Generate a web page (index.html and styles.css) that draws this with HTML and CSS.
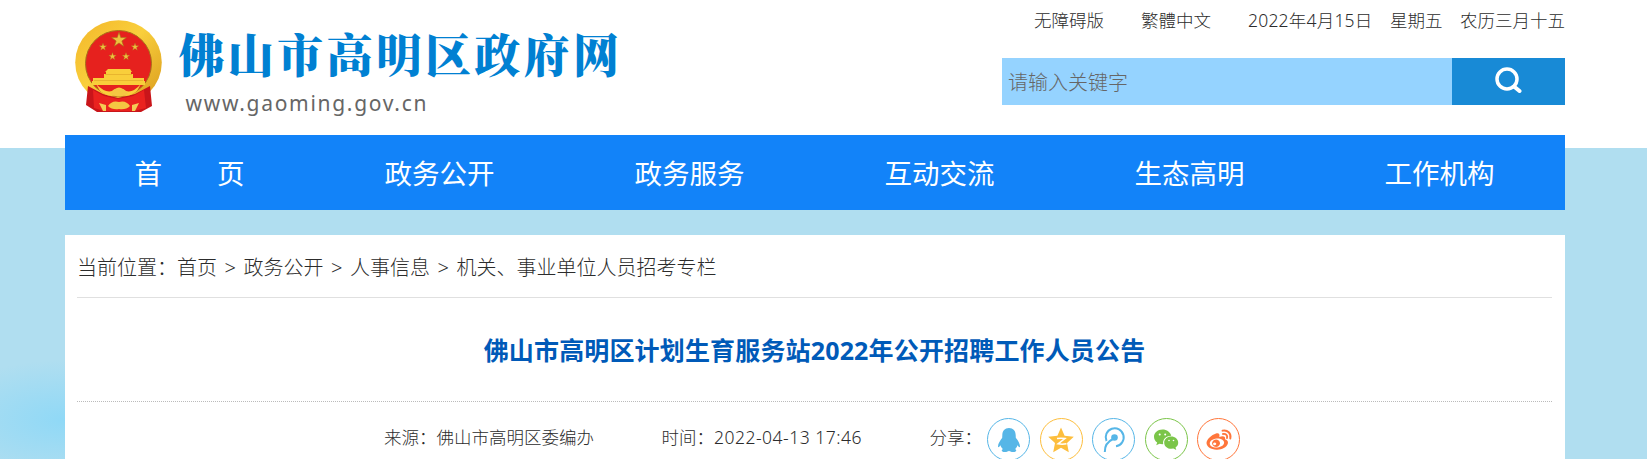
FILE: index.html
```html
<!DOCTYPE html>
<html lang="zh-CN">

<head>
  <meta charset="UTF-8">
  <meta name="viewport" content="width=device-width, initial-scale=1.0">
  <title>佛山市高明区计划生育服务站2022年公开招聘工作人员公告</title>
  <link rel="stylesheet" href="styles.css">
</head>

<body>
  <div class="wrap">
    <div class="header">
      <a class="logo">
        <svg class="emblem" viewBox="0 0 88 94">
          <defs>
            <linearGradient id="gold" x1="0" y1="0" x2="1" y2="1">
              <stop offset="0" stop-color="#f3b62a" />
              <stop offset=".45" stop-color="#f9cf3c" />
              <stop offset="1" stop-color="#d99a1c" />
            </linearGradient>
            <path id="star" d="M0-10 2.3-3.1H9.5L3.7 1.2 5.9 8.1 0 3.8-5.9 8.1-3.7 1.2-9.5-3.1H-2.3Z" />
          </defs>
          <ellipse cx="43.5" cy="42.5" rx="43.3" ry="42.3" fill="url(#gold)" />
          <ellipse cx="43.5" cy="43.5" rx="33" ry="33" fill="#e6211e" stroke="#a8701a" stroke-width="1" />
          <g fill="#eec23e" stroke="#a96d18" stroke-width=".8">
            <use href="#star" transform="translate(44 20) scale(.78)" />
            <use href="#star" transform="translate(28 27) scale(.4)" />
            <use href="#star" transform="translate(60 27) scale(.4)" />
            <use href="#star" transform="translate(37.500 36.500) scale(.4)" />
            <use href="#star" transform="translate(51 36.500) scale(.4)" />
          </g>
          <path fill="#f9ce3b" d="M33 49H55L57 52H56V54H58V58H69V61H70V65H17V61H18V58H29V54H31V52H30Z" />
          <path stroke="#e3ab2a" stroke-width=".7" fill="none" d="M30 54.500H57M19 60.500H68" />
          <path fill="#c9151a" d="M13 66 28 74 43 78 60 74 75 66 77 86 66 92H22L11 85Z" />
          <path fill="#ea221f" d="M18 70 29 76 43 79 58 76 69 70 71 88 59 91H29L19 88Z" />
          <path fill="#f9cf3c" d="M21 64Q33 76 40 69Q44 66 48 69Q55 76 66 64L62 71Q53 78 48 75Q44 78 40 75Q34 78 25 71Z" />
          <path fill="#f4c742" d="M35 74Q38 68 44 69Q50 68 53 74Q48 77 44 76Q40 77 35 74ZM33 86Q37 80 44 82Q51 80 55 86Q51 90 44 89Q37 90 33 86Z" />
          <path fill="#f4cc55" d="M24 83 31 85V91H28ZM64 83 57 85V91H60Z" />
        </svg>
        <div class="logo-text">
          <div class="site-name">佛山市高明区政府网</div>
          <div class="site-url">www.gaoming.gov.cn</div>
        </div>
      </a>
      <div class="header-right">
        <div class="top-links">
          <a class="link-wza">无障碍版</a>
          <a class="link-ft">繁體中文</a>
          <span class="date">2022年4月15日</span>
          <span class="week">星期五</span>
          <span>农历三月十五</span>
        </div>
        <div class="search">
          <input class="search-input" type="text" placeholder="请输入关键字">
          <button class="search-btn">
            <svg width="28" height="26" viewBox="0 0 28 26" fill="none" stroke="#fff">
              <circle cx="12" cy="12" r="10" stroke-width="3.500" />
              <path d="M19 19.500 24.500 24" stroke-width="4" stroke-linecap="round" />
            </svg>
          </button>
        </div>
      </div>
    </div>

    <div class="nav">
      <a>首　　页</a>
      <a>政务公开</a>
      <a>政务服务</a>
      <a>互动交流</a>
      <a>生态高明</a>
      <a>工作机构</a>
    </div>

    <div class="content">
      <div class="position">
        当前位置：<a>首页</a><i>&gt;</i><a>政务公开</a><i>&gt;</i><a>人事信息</a><i>&gt;</i><a>机关、事业单位人员招考专栏</a>
      </div>
      <h1 class="title">佛山市高明区计划生育服务站2022年公开招聘工作人员公告</h1>
      <div class="info">
        <span class="source">来源：佛山市高明区委编办</span>
        <span class="time">时间：<span class="time-value">2022-04-13 17:46</span></span>
        <span class="share-label">分享：</span>
        <div class="share">
          <a class="icon qq">
            <svg viewBox="0 0 24 24"><path d="M12 0C7.800 0 5.300 3 5.300 7.300L5.200 9.700C3 12.500 1 15.700 1 18.400C1 20 2.200 19 3.500 17.200C3.900 18.800 4.700 20 5.900 21C4 22 4.300 24 7.800 24C10 24 11.200 23.300 12 22.700C12.800 23.300 14 24 16.200 24C19.700 24 20 22 18.100 21C19.300 20 20.100 18.800 20.500 17.200C21.800 19 23 20 23 18.400C23 15.700 21 12.500 18.800 9.700L18.700 7.300C18.700 3 16.200 0 12 0Z" /></svg>
          </a>
          <a class="icon qzone">
            <svg viewBox="0 0 24 24"><path d="M12-.5 15.600 7.700 24.800 8.700 18 15 19.800 24.300 12 19.700 4.200 24.300 6 15-.8 8.700 8.400 7.700Z" /><path fill="none" stroke="#fff" stroke-width="1.500" d="M8 10.500Q12 9.800 16 10.500L9 15.800Q13 16.600 17.500 15.800" /></svg>
          </a>
          <a class="icon tqq">
            <svg viewBox="0 0 24 24"><circle cx="12.500" cy="9.500" r="3.300" /><path fill="none" stroke="currentColor" stroke-width="2" d="M4.500 13A9 9 0 1 1 14 18.200M11 11Q2.500 15 2.800 24" /></svg>
          </a>
          <a class="icon wechat">
            <svg viewBox="0 0 24 24"><path d="M8.500 1.500C3.500 1.500 0 4.800 0 8.800C0 11.200 1.200 13.200 3.200 14.600L2.200 17.300 5.500 15.700Q7.500 16.300 9.200 16.100C8.300 11.500 12 7.600 17.300 7.700C16.300 4.100 12.800 1.500 8.500 1.500Z" /><path d="M17.200 8.600C13.300 8.600 10.200 11.300 10.200 14.700C10.200 18.200 13.300 20.800 17.200 20.800L19.400 20.500 22.300 22 21.500 19.500C23.200 18.300 24.200 16.700 24.200 14.700C24.200 11.300 21.100 8.600 17.200 8.600Z" /><g fill="#fff"><circle cx="5.700" cy="6.500" r="1" /><circle cx="11.200" cy="6.500" r="1" /><circle cx="15" cy="12.500" r=".8" /><circle cx="19.500" cy="12.500" r=".8" /></g></svg>
          </a>
          <a class="icon weibo">
            <svg viewBox="0 0 24 24"><path fill-rule="evenodd" d="M9 5.500C12 4.500 13 6.500 12.300 9C15.500 7.600 19 8 18 11.200C20.500 12 21.500 13.500 20.800 15.800C19.500 19.500 14.500 22 9.500 21.700C4 21.500-.5 18.800-.5 15C-.5 11.500 4.500 6.800 9 5.500ZM9.500 10.500C5.500 10.900 2.500 13.200 2.800 15.700C3 18.200 6.400 19.900 10.400 19.500C14.400 19.100 17.400 16.900 17.100 14.300C16.800 11.800 13.500 10.100 9.500 10.500Z" /><path fill-rule="evenodd" d="M9 11.500A4 3.700 0 1 0 9.100 11.500ZM7.700 14.500A1.600 1.400 0 1 1 7.600 14.500Z" /><path fill="none" stroke="currentColor" stroke-width="1.900" stroke-linecap="round" d="M15.500 2.700C20.500 1.500 24.500 5.500 23.300 10.500M16 6C19 5.500 20.800 7.500 20 10" /></svg>
          </a>
        </div>
      </div>
    </div>
  </div>
</body>

</html>
```
FILE: styles.css
```css
* {
  box-sizing: border-box;
}

body {
  margin: 0;
  height: 459px;
  overflow: hidden;
  color: #2c2c2c;
  font-family: "Noto Sans", "Noto Sans CJK SC", sans-serif;
  font-size: 17.5px;
  font-weight: 300;
  background:
    linear-gradient(#fff 148px, transparent 148px),
    radial-gradient(ellipse 130px 60px at 65px 420px, rgba(140, 216, 247, .9), transparent),
    #b0def0;
}

.wrap {
  width: 1500px;
  margin-left: 65px;
}

.header {
  display: flex;
  justify-content: space-between;
  height: 135px;
}

.logo {
  display: flex;
}

.emblem {
  width: 88px;
  height: 94px;
  margin: 20px 0 0 9.5px;
}

.logo-text {
  margin: 22px 0 0 16px;
}

.site-name {
  height: 60px;
  line-height: 60px;
  color: #0080d2;
  font-family: "Noto Serif CJK SC", "Noto Sans CJK SC", serif;
  font-size: 46px;
  font-weight: 900;
  letter-spacing: 3.3px;
  white-space: nowrap;
}

.site-url {
  margin-left: 7px;
  padding-top: 4px;
  line-height: 34px;
  color: #666;
  font-family: "Noto Sans", sans-serif;
  font-size: 21px;
  font-weight: 400;
  letter-spacing: 1.7px;
}

.header-right {
  width: 563px;
}

.top-links {
  display: flex;
  justify-content: flex-end;
  height: 58px;
  line-height: 41px;
  white-space: nowrap;
}

.link-wza {
  margin-right: 37px;
}

.link-ft {
  margin-right: 37px;
}

.date,
.week {
  margin-right: 17.5px;
}

.date {
  letter-spacing: .2px;
}

.search {
  display: flex;
  height: 47px;
}

.search-input {
  flex: 1;
  min-width: 0;
  padding: 2px 6px 0;
  border: 0;
  background: #95d3ff;
  font: inherit;
  font-size: 20px;
}

.search-input::placeholder {
  color: #666;
}

.search-btn {
  display: flex;
  justify-content: center;
  width: 113px;
  padding: 9px 0 0;
  border: 0;
  background: #188ad6;
}

.nav {
  display: flex;
  height: 75px;
  background: #1283f9;
}

.nav a {
  width: 250px;
  padding-right: 1px;
  line-height: 77px;
  text-align: center;
  color: #fff;
  font-size: 27.5px;
  font-weight: 400;
}

.content {
  height: 240px;
  margin-top: 25px;
  padding: 0 13px 0 12px;
  background: #fff;
}

.position {
  height: 63px;
  line-height: 65px;
  border-bottom: 1px solid #e0e0e0;
  font-size: 20px;
}

.position i {
  display: inline-block;
  width: 26.5px;
  text-align: center;
  font-style: normal;
}

.title {
  height: 104px;
  margin: 0;
  border-bottom: 1px dotted #bbb;
  line-height: 104px;
  text-align: center;
  color: #005ab8;
  font-size: 25px;
  font-weight: 700;
  letter-spacing: .16px;
}

.info {
  display: flex;
  padding: 16px 0 0 307px;
  line-height: 38px;
  white-space: nowrap;
}

.source {
  width: 277.5px;
}

.time {
  width: 268px;
}

.time-value {
  letter-spacing: .5px;
}

.share-label {
  width: 57.5px;
}

.share {
  display: flex;
  gap: 9.5px;
}

.icon {
  display: flex;
  align-items: center;
  justify-content: center;
  width: 43px;
  height: 43px;
  border: 1px solid;
  border-radius: 50%;
}

.icon svg {
  width: 24px;
  height: 24px;
  fill: currentColor;
  overflow: visible;
}

.qq,
.tqq {
  color: #56b6e7;
}

.qzone {
  color: #fdbe3d;
}

.wechat {
  color: #7bc549;
}

.weibo {
  color: #ff763b;
}
```
